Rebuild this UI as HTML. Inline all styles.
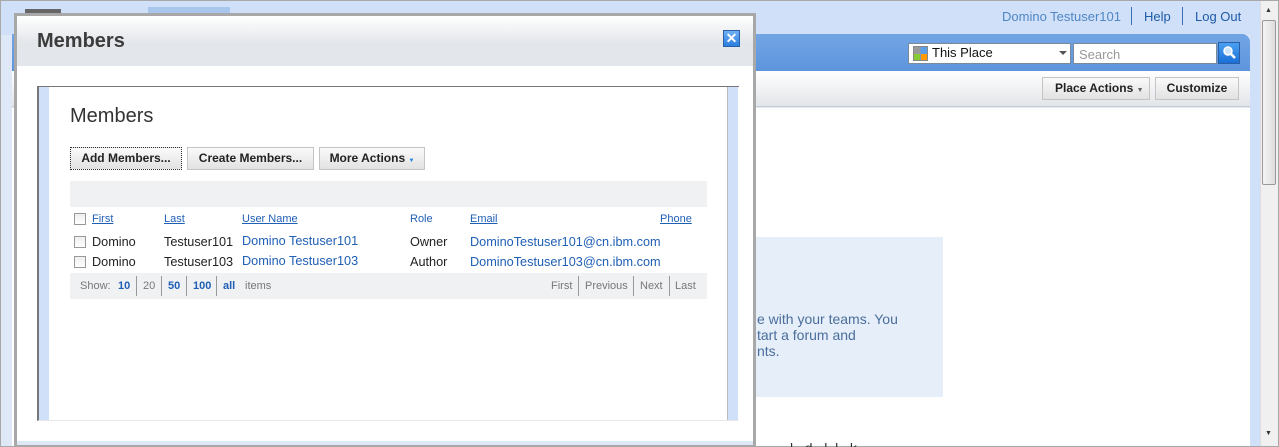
<!DOCTYPE html>
<html><head><style>
*{margin:0;padding:0;box-sizing:border-box}
body{width:1279px;height:447px;overflow:hidden;position:relative;font-family:"Liberation Sans",Arial,sans-serif;background:#fff;font-size:12px}
.a{position:absolute}
a{color:#1f5fb5}
.btn{position:absolute;top:147px;height:23px;border:1px solid #c4c4c4;background:linear-gradient(#fafafa,#e2e2e2);font-weight:bold;font-size:12px;color:#222;text-align:center;line-height:21px}
.cb{position:absolute;width:12px;height:12px;border:1px solid #999;background:linear-gradient(#eee,#fff)}
.hd{position:absolute;top:213px;font-size:11px;color:#1f5fb5;text-decoration:underline}
.td{position:absolute;font-size:12.7px;color:#222}
.lk{color:#1f5fb5}
.pg{position:absolute;top:280px;font-size:11px;color:#777}
</style></head><body>
<div class="a" style="left:0;top:0;width:1279px;height:447px;border:1px solid #a8a8a8;background:#dfe8f6"></div>
<div class="a" style="top:1px;left:1px;width:1259px;height:34px;background:#cfe0f8"></div>
<div class="a" style="left:148px;top:7px;width:82px;height:10px;background:#a9c6ec"></div>
<div class="a" style="left:25px;top:9px;width:36px;height:8px;background:#666"></div>
<div class="a" style="left:1002px;top:9px;font-size:13px;color:#4f86c6">Domino Testuser101</div>
<div class="a" style="left:1131px;top:7px;width:1px;height:18px;background:#3b6fb5"></div>
<div class="a" style="left:1144px;top:9px;font-size:13px;color:#1e5aa8">Help</div>
<div class="a" style="left:1182px;top:7px;width:1px;height:18px;background:#3b6fb5"></div>
<div class="a" style="left:1195px;top:9px;font-size:13px;color:#1e5aa8">Log Out</div>
<div class="a" style="left:12px;top:34px;width:1238px;height:37px;background:linear-gradient(#72a5e4,#5d95dd);border-radius:0 8px 0 0"></div>
<div class="a" style="left:908px;top:43px;width:163px;height:21px;background:#fff;border:1px solid #7a8a9a"></div>
<div class="a" style="left:913px;top:46px;width:15px;height:15px;background:linear-gradient(90deg,#999 50%,#5b9de8 50%);border:1px solid #888"></div>
<div class="a" style="left:914px;top:54px;width:6px;height:6px;background:#8c3"></div>
<div class="a" style="left:921px;top:54px;width:6px;height:6px;background:#f90"></div>
<div class="a" style="left:932px;top:45px;font-size:13px;color:#111">This Place</div>
<div class="a" style="left:1059px;top:51px;border:4px solid transparent;border-top:4px solid #555"></div>
<div class="a" style="left:1073px;top:43px;width:144px;height:21px;background:#fff;border:1px solid #7a8a9a;font-size:13px;color:#999;padding:3px 5px">Search</div>
<div class="a" style="left:1218px;top:42px;width:22px;height:22px;background:linear-gradient(#4aa0f0,#1a6fd8);border:1px solid #2a5fa8"><svg width="20" height="20"><circle cx="9" cy="8" r="4" fill="#cfe6ff" stroke="#fff" stroke-width="1.5"/><line x1="12" y1="11" x2="16" y2="15" stroke="#fff" stroke-width="2.5"/></svg></div>
<div class="a" style="left:12px;top:71px;width:1238px;height:36px;background:linear-gradient(#fff,#e2e5e9);border-bottom:1px solid #c8ccd0"></div>
<div class="a" style="left:1042px;top:77px;width:108px;height:23px;border:1px solid #c4c4c4;background:linear-gradient(#fafafa,#e2e2e2);font-weight:bold;color:#222;line-height:21px;padding-left:12px">Place Actions <span style="font-size:7px;color:#666">▼</span></div>
<div class="a" style="left:1155px;top:77px;width:84px;height:23px;border:1px solid #c4c4c4;background:linear-gradient(#fafafa,#e2e2e2);font-weight:bold;color:#222;line-height:21px;text-align:center">Customize</div>
<div class="a" style="left:12px;top:108px;width:1238px;height:338px;background:#fff"></div>
<div class="a" style="left:1250px;top:34px;width:10px;height:412px;background:#cfe0f8"></div>
<div class="a" style="left:1260px;top:1px;width:18px;height:445px;background:#f0f0f0;border-left:1px solid #ddd"></div>
<div class="a" style="left:1262px;top:20px;width:14px;height:165px;background:linear-gradient(90deg,#f4f4f4,#ddd);border:1px solid #999;border-radius:2px"></div>
<div class="a" style="left:1265px;top:7px;font-size:7px;color:#333">▲</div>
<div class="a" style="left:1265px;top:430px;font-size:7px;color:#333">▼</div>
<div class="a" style="left:718px;top:237px;width:225px;height:160px;background:#e6eef9"></div>
<div class="a" style="left:757px;top:311px;font-size:14px;color:#4a6e9c;line-height:16px;white-space:nowrap">e with your teams. You<br>tart a forum and<br>nts.</div>
<div class="a" style="left:790px;top:438px;height:9px;overflow:hidden;font-size:14px;color:#333;line-height:20px">l &nbsp; d &nbsp; l &nbsp;l &nbsp; k</div>
<!-- dialog -->
<div class="a" style="left:14px;top:13px;width:742px;height:434px;border:3px solid #a8a8a8;background:#fff"></div>
<div class="a" style="left:17px;top:16px;width:736px;height:50px;background:linear-gradient(#fff,#e3e6ea 55%)"></div>
<div class="a" style="left:37px;top:30px;font-size:20px;font-weight:bold;color:#3c3c3c">Members</div>
<div class="a" style="left:723px;top:30px;width:17px;height:17px;background:linear-gradient(#6fb0f5,#2a7ee0);border:1px solid #2a5fa8;color:#fff;font-size:14px;line-height:14px;text-align:center;font-weight:bold">✕</div>
<div class="a" style="left:17px;top:441px;width:736px;height:4px;background:#dfe8f6"></div>
<div class="a" style="left:37px;top:86px;width:702px;height:335px;border-top:1px solid #777;border-left:2px solid #777;border-bottom:1px solid #e8e8e8"></div>
<div class="a" style="left:39px;top:87px;width:10px;height:333px;background:#cfe0f8"></div>
<div class="a" style="left:727px;top:87px;width:11px;height:333px;background:#cfe0f8;border-left:1px solid #bbb"></div>
<div class="a" style="left:70px;top:105px;font-size:20px;color:#333">Members</div>
<div class="btn" style="left:70px;width:112px;border:1px dotted #333">Add Members...</div>
<div class="btn" style="left:187px;width:127px">Create Members...</div>
<div class="btn" style="left:319px;width:106px">More Actions <span style="font-size:6px;color:#1f7fe0">▼</span></div>
<div class="a" style="left:70px;top:181px;width:637px;height:26px;background:#f0f1f3"></div>
<div class="cb" style="left:74px;top:213px"></div>
<div class="hd" style="left:92px">First</div>
<div class="hd" style="left:164px">Last</div>
<div class="hd" style="left:242px">User Name</div>
<div class="hd" style="left:410px;text-decoration:none">Role</div>
<div class="hd" style="left:470px">Email</div>
<div class="hd" style="left:660px">Phone</div>
<div class="cb" style="left:74px;top:236px"></div>
<div class="td" style="left:92px;top:235px">Domino</div>
<div class="td" style="left:164px;top:235px">Testuser101</div>
<div class="td lk" style="left:242px;top:234px">Domino Testuser101</div>
<div class="td" style="left:410px;top:235px">Owner</div>
<div class="td lk" style="left:470px;top:235px">DominoTestuser101@cn.ibm.com</div>
<div class="cb" style="left:74px;top:256px"></div>
<div class="td" style="left:92px;top:255px">Domino</div>
<div class="td" style="left:164px;top:255px">Testuser103</div>
<div class="td lk" style="left:242px;top:254px">Domino Testuser103</div>
<div class="td" style="left:410px;top:255px">Author</div>
<div class="td lk" style="left:470px;top:255px">DominoTestuser103@cn.ibm.com</div>
<div class="a" style="left:70px;top:273px;width:637px;height:26px;background:#f0f1f3"></div>
<div class="pg" style="left:80px">Show:</div>
<div class="pg" style="left:118px;color:#1f5fb5;font-weight:bold">10</div>
<div class="a" style="left:136px;top:276px;width:1px;height:20px;background:#999"></div>
<div class="pg" style="left:143px">20</div>
<div class="a" style="left:161px;top:276px;width:1px;height:20px;background:#999"></div>
<div class="pg" style="left:168px;color:#1f5fb5;font-weight:bold">50</div>
<div class="a" style="left:186px;top:276px;width:1px;height:20px;background:#999"></div>
<div class="pg" style="left:193px;color:#1f5fb5;font-weight:bold">100</div>
<div class="a" style="left:216px;top:276px;width:1px;height:20px;background:#999"></div>
<div class="pg" style="left:223px;color:#1f5fb5;font-weight:bold">all</div>
<div class="pg" style="left:245px">items</div>
<div class="pg" style="left:551px">First</div>
<div class="a" style="left:578px;top:276px;width:1px;height:20px;background:#999"></div>
<div class="pg" style="left:585px">Previous</div>
<div class="a" style="left:633px;top:276px;width:1px;height:20px;background:#999"></div>
<div class="pg" style="left:640px">Next</div>
<div class="a" style="left:669px;top:276px;width:1px;height:20px;background:#999"></div>
<div class="pg" style="left:675px">Last</div>
</body></html>
